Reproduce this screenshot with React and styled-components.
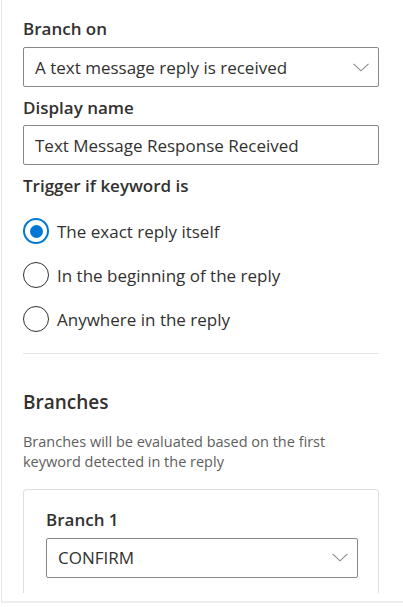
import React, { useState } from 'react';
import styled, { createGlobalStyle } from 'styled-components';

const GlobalStyle = createGlobalStyle`
    body {
        margin: 0;
        background: #ffffff;
        font-family: "Open Sans", "Noto Sans", sans-serif;
        color: #323130;
    }
`;

const Panel = styled.div`
    width: 402px;
    height: 603px;
    margin-left: 1px;
    border-left: 1px solid #e6e5e4;
    border-bottom: 2px solid #eeedec;
    box-sizing: border-box;
`;

const Scroll = styled.div`
    height: 593px;
    overflow: hidden;
    padding: 18px 24px 0 21px;
    box-sizing: border-box;
    display: flex;
    flex-direction: column;

    & > * {
        flex-shrink: 0;
    }
`;

const Label = styled.div`
    font-size: 17px;
    line-height: 22px;
    font-weight: 600;
    margin-top: ${p => p.$top || 0}px;
`;

const Field = styled.div`
    height: 40px;
    flex-shrink: 0;
    margin-top: ${p => p.$top || 0}px;
    border: 1px solid #8a8886;
    border-radius: 2px;
    box-sizing: border-box;
    display: flex;
    align-items: center;
    padding: 0 9px 0 11px;
    font-size: 17px;
    color: #323130;
`;

const FieldText = styled.span`
    flex: 1;
    white-space: nowrap;
`;

const RadioGroup = styled.div`
    display: flex;
    flex-direction: column;
    margin-top: 12.5px;
`;

const RadioRow = styled.label`
    height: 44px;
    display: flex;
    align-items: center;
    gap: 8px;
    font-size: 17px;
    cursor: pointer;
`;

const RadioCircle = styled.span`
    width: 26px;
    height: 26px;
    border-radius: 50%;
    box-sizing: border-box;
    border: ${p => (p.$on ? '2px solid #0078d4' : '1.5px solid #323130')};
    display: flex;
    align-items: center;
    justify-content: center;
    flex-shrink: 0;

    &::after {
        content: '';
        width: 13px;
        height: 13px;
        border-radius: 50%;
        background: #0078d4;
        display: ${p => (p.$on ? 'block' : 'none')};
    }
`;

const Divider = styled.hr`
    width: 100%;
    border: none;
    border-top: 1px solid #e6e5e4;
    margin: 12px 0 0;
`;

const Heading = styled.div`
    font-size: 19px;
    line-height: 26px;
    font-weight: 600;
    margin-top: 35px;
`;

const Note = styled.div`
    font-size: 14.5px;
    line-height: 20px;
    color: #605e5c;
    margin-top: 17px;
`;

const Card = styled.div`
    margin-top: 16.5px;
    border: 1px solid #e1dfdd;
    border-bottom: none;
    border-radius: 4px 4px 0 0;
    padding: 19.5px 20px 20px 22px;
    display: flex;
    flex-direction: column;
`;

const Chevron = () => (
    <svg width="16" height="9" viewBox="0 0 16 9" fill="none">
        <path d="M0.5 0.8 L8 7.8 L15.5 0.8" stroke="#8a8886" strokeWidth="1.1" />
    </svg>
);

const options = [
    'The exact reply itself',
    'In the beginning of the reply',
    'Anywhere in the reply',
];

export default function App() {
    const [ choice, setChoice ] = useState(0);

    return (
        <Panel>
            <GlobalStyle />
            <Scroll>
                <Label>Branch on</Label>
                <Field $top={7}>
                    <FieldText>A text message reply is received</FieldText>
                    <Chevron />
                </Field>

                <Label $top={10}>Display name</Label>
                <Field $top={6}>
                    <FieldText>Text Message Response Received</FieldText>
                </Field>

                <Label $top={9.5}>Trigger if keyword is</Label>
                <RadioGroup>
                    {options.map((opt, i) => (
                        <RadioRow key={opt} onClick={() => setChoice(i)}>
                            <RadioCircle $on={choice === i} />
                            {opt}
                        </RadioRow>
                    ))}
                </RadioGroup>

                <Divider />

                <Heading>Branches</Heading>
                <Note>
                    Branches will be evaluated based on the first<br />
                    keyword detected in the reply
                </Note>

                <Card>
                    <Label>Branch 1</Label>
                    <Field $top={6.5}>
                        <FieldText>CONFIRM</FieldText>
                        <Chevron />
                    </Field>
                </Card>
            </Scroll>
        </Panel>
    );
}
